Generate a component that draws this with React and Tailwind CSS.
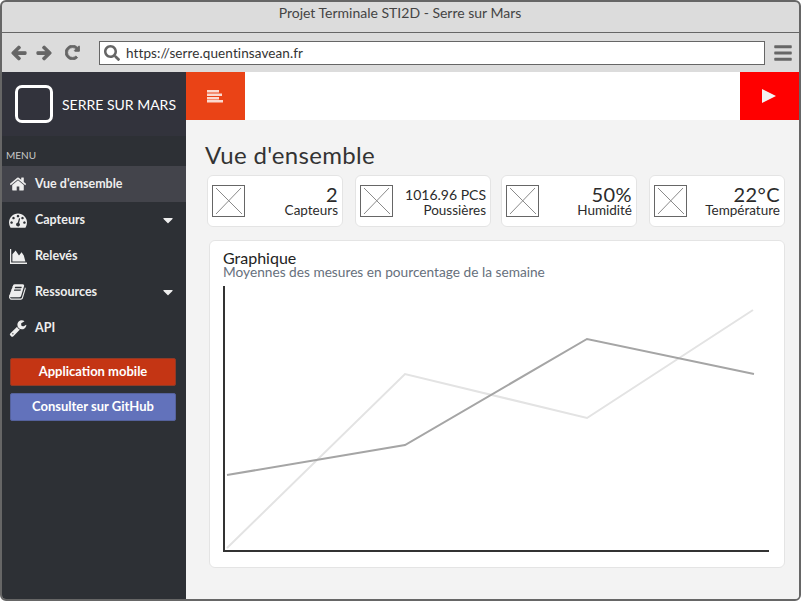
import React from 'react';
import { FaArrowLeft, FaArrowRight, FaRedoAlt, FaSearch, FaBars, FaCaretDown } from 'react-icons/fa';

const FONT = 'font-["Lato","Noto_Sans",sans-serif]';

const Glyph = ({ d, size = 18 }) => (
  <svg width={size} height={size} viewBox="0 0 1792 1792" fill="currentColor"><path d={d} /></svg>
);

const HomeIcon = () => (
  <Glyph d="M1472 992v480q0 26-19 45t-45 19h-384v-384h-256v384h-384q-26 0-45-19t-19-45v-480q0-1 .5-3t.5-3l575-474 575 474q1 2 1 6zm223-69l-62 74q-8 9-21 11h-3q-13 0-21-7l-692-577-692 577q-12 8-24 7-13-2-21-11l-62-74q-8-10-7-23.5t11-21.5l719-599q32-26 76-26t76 26l244 204v-195q0-14 9-23t23-9h192q14 0 23 9t9 23v408l219 182q10 8 11 21.5t-7 23.5z" />
);
const GaugeIcon = () => (
  <Glyph d="M384 1152q0-53-37.5-90.5t-90.5-37.5-90.5 37.5-37.5 90.5 37.5 90.5 90.5 37.5 90.5-37.5 37.5-90.5zm192-448q0-53-37.5-90.5t-90.5-37.5-90.5 37.5-37.5 90.5 37.5 90.5 90.5 37.5 90.5-37.5 37.5-90.5zm428 481l101-382q6-26-7.5-48.5t-38.5-29.5-48 6.5-30 39.5l-101 382q-60 5-107 43.5t-63 98.5q-20 77 20 146t117 89 146-20 89-117q16-60-6-117t-72-91zm660-33q0-53-37.5-90.5t-90.5-37.5-90.5 37.5-37.5 90.5 37.5 90.5 90.5 37.5 90.5-37.5 37.5-90.5zm-640-640q0-53-37.5-90.5t-90.5-37.5-90.5 37.5-37.5 90.5 37.5 90.5 90.5 37.5 90.5-37.5 37.5-90.5zm448 192q0-53-37.5-90.5t-90.5-37.5-90.5 37.5-37.5 90.5 37.5 90.5 90.5 37.5 90.5-37.5 37.5-90.5zm320 448q0 261-141 483-19 29-54 29h-1402q-35 0-54-29-141-221-141-483 0-182 71-348t191-286 286-191 348-71 348 71 286 191 191 286 71 348z" />
);
const ChartIcon = () => (
  <svg width="17" height="15" viewBox="0 0 17 15" fill="currentColor">
    <path d="M0 0h1.2v13.6H17V15H0z" />
    <path d="M2.4 12.6V5.2L5.6 1.4l3.4 5 2.6-3.2 2.2 3.4 1.6 6z" />
  </svg>
);
const BookIcon = () => (
  <Glyph d="M1639 478q40 57 18 129l-275 906q-19 64-76.5 107.5t-122.5 43.5h-923q-77 0-148.5-53.5t-99.5-131.5q-24-67-2-127 0-4 3-27t4-37q1-8-3-21.5t-3-19.5q2-11 8-21t16.5-23.5 16.5-23.5q23-38 45-91.5t30-91.5q3-10 .5-30t-.5-28q3-11 17-28t17-23q21-36 42-92t25-90q1-9-2.5-32t.5-28q4-13 22-30.5t22-22.5q19-26 42.5-84.5t27.5-96.5q1-8-3-25.5t-2-26.5q2-8 9-18t18-23 17-21q8-12 16.5-30.5t15-35 16-36 19.5-32 26.5-23.5 36-11.5 47.5 5.5l-1 3q38-9 51-9h761q74 0 114 56t18 130l-274 906q-36 119-71.5 153.5t-128.5 34.5h-869q-27 0-38 15-11 16-1 43 24 70 144 70h923q29 0 56-15.5t35-41.5l300-987q7-22 5-57 38 15 59 43zm-1064 2q-4 13 2 22.5t20 9.5h608q13 0 25.5-9.5t16.5-22.5l21-64q4-13-2-22.5t-20-9.5h-608q-13 0-25.5 9.5t-16.5 22.5zm-83 256q-4 13 2 22.5t20 9.5h608q13 0 25.5-9.5t16.5-22.5l21-64q4-13-2-22.5t-20-9.5h-608q-13 0-25.5 9.5t-16.5 22.5z" />
);
const WrenchIcon = () => (
  <Glyph d="M448 1472q0-26-19-45t-45-19-45 19-19 45 19 45 45 19 45-19 19-45zm644-420l-682 682q-37 37-90 37-52 0-91-37l-106-108q-38-36-38-90 0-53 38-91l681-681q39 98 114.5 173.5t173.5 114.5zm634-435q0 39-23 106-47 134-164.5 217.5t-258.5 83.5q-185 0-316.5-131.5t-131.5-316.5 131.5-316.5 316.5-131.5q58 0 121.5 16.5t107.5 46.5q16 11 16 28t-16 28l-293 169v224l193 107q5-3 79-48.5t135.5-81 70.5-35.5q15 0 23.5 10t8.5 25z" />
);

const MENU = [
  { label: "Vue d'ensemble", Icon: HomeIcon, active: true },
  { label: 'Capteurs', Icon: GaugeIcon, caret: true },
  { label: 'Relevés', Icon: ChartIcon },
  { label: 'Ressources', Icon: BookIcon, caret: true },
  { label: 'API', Icon: WrenchIcon },
];

const STATS = [
  { value: '2', label: 'Capteurs', big: true, gap: '' },
  { value: '1016.96 PCS', label: 'Poussières', gap: 'ml-[12px]' },
  { value: '50%', label: 'Humidité', big: true, gap: 'ml-[10px]' },
  { value: '22°C', label: 'Température', big: true, gap: 'ml-[12px]' },
];

const Placeholder = () => (
  <svg width="33" height="32" viewBox="0 0 33 32" className="shrink-0">
    <rect x="0.5" y="0.5" width="32" height="31" fill="#fff" stroke="#666" />
    <path d="M4 3 L30 29 M29 3 L4 29" stroke="#8a8a8a" strokeWidth="1" fill="none" />
  </svg>
);

const Stat = ({ value, label, big, gap }) => (
  <div className={`${gap} w-[136px] h-[52px] bg-white border border-[#e4e4e4] rounded-md flex items-center pl-[4px] pr-[4px]`}>
    <Placeholder />
    <div className="flex-1 text-right text-[#2b2b2b]">
      <div className={big ? 'text-[20px] leading-[19px] tracking-[0.4px]' : 'text-[14px] leading-[19px]'}>{value}</div>
      <div className="text-[13.5px] leading-[13px]">{label}</div>
    </div>
  </div>
);

export default function App() {
  return (
    <div className={`${FONT} w-[801px] h-[601px] border-2 border-[#666] rounded-md overflow-hidden flex flex-col bg-[#dcdcdc]`}>
      {/* browser chrome */}
      <div className="h-[31px] shrink-0 border-b border-[#666] flex items-center justify-center text-[14px] text-[#444] pb-[9px] pr-[1px]">
        Projet Terminale STI2D - Serre sur Mars
      </div>
      <div className="h-[39px] shrink-0 flex items-center pl-[9px]">
        <FaArrowLeft className="text-[#666] text-[16px]" stroke="currentColor" strokeWidth={40} />
        <FaArrowRight className="text-[#666] text-[16px] ml-[9px]" stroke="currentColor" strokeWidth={40} />
        <FaRedoAlt className="text-[#666] text-[15px] ml-[13px]" stroke="currentColor" strokeWidth={30} />
        <div className="ml-[19px] w-[666px] h-[24px] bg-white border border-[#666] flex items-center pl-[4px] pt-[1px] text-[13.5px] text-[#333]">
          <FaSearch className="text-[#666] text-[16px] -mt-[1px]" />
          <span className="ml-[6px] tracking-[0.1px]">https://serre.quentinsavean.fr</span>
        </div>
        <FaBars className="text-[#666] text-[20px] ml-[8px]" />
      </div>

      <div className="flex-1 flex min-h-0">
        {/* sidebar */}
        <div className="w-[184px] shrink-0 bg-[#2d3035] flex flex-col text-white">
          <div className="h-[64px] shrink-0 bg-[#32333c] flex items-center pl-[13px]">
            <div className="w-[38px] h-[38px] rounded-[7px] border-[3px] border-white" />
            <span className="ml-[9px] text-[14px]">SERRE SUR MARS</span>
          </div>
          <div className="h-[30px] shrink-0 flex items-end pl-[4px] pb-[3px] text-[10px] text-[#c8c8c8]">MENU</div>
          {MENU.map(({ label, Icon, active, caret }) => (
            <div key={label} className={`h-[36px] shrink-0 flex items-center pl-[7px] pr-[10px] text-[12.5px] font-bold ${active ? 'bg-[#43444b]' : ''} text-[#eee]`}>
              <span className="w-[18px] flex justify-center"><Icon /></span>
              <span className="ml-[8px] flex-1 pt-[1px]">{label}</span>
              {caret && <FaCaretDown className="text-[16px]" />}
            </div>
          ))}
          <div className="mt-[12px] ml-[8px] mr-[10px] h-[28px] bg-[#c43514] border border-[#8f3a26] rounded-[2px] flex items-center justify-center text-[13px] font-bold">
            Application mobile
          </div>
          <div className="mt-[7px] ml-[8px] mr-[10px] h-[28px] bg-[#6272bb] border border-[#55629c] rounded-[2px] flex items-center justify-center text-[13px] font-bold">
            Consulter sur GitHub
          </div>
        </div>

        {/* main */}
        <div className="flex-1 min-w-0 flex flex-col bg-[#f3f3f3]">
          <div className="h-[48px] shrink-0 bg-white flex justify-between">
            <div className="w-[59px] bg-[#ea4316] flex items-center pl-[21px]">
              <svg width="16" height="14" viewBox="0 0 16 14">
                <g fill="#fbd9cf">
                  <rect x="0" y="1" width="12" height="2.5" />
                  <rect x="0" y="4.5" width="15" height="2.5" />
                  <rect x="0" y="8" width="12" height="2.5" />
                  <rect x="0" y="11" width="16" height="2.5" />
                </g>
              </svg>
            </div>
            <div className="w-[59px] bg-[#ff0000] flex items-center pl-[22px]">
              <svg width="14" height="14" viewBox="0 0 14 14"><path d="M0 0L14 7L0 14z" fill="#f3f3f3" /></svg>
            </div>
          </div>
          <div className="flex-1 min-h-0 flex flex-col pl-[19px]">
            <div className="text-[24px] leading-[30px] mt-[20px] text-[#333] tracking-[0.3px]">Vue d'ensemble</div>
            <div className="flex mt-[5px] ml-[2px]">
              {STATS.map((s) => <Stat key={s.label} {...s} />)}
            </div>
            <div className="mt-[13px] ml-[4px] w-[576px] h-[328px] bg-white border border-[#e4e4e4] rounded-md pl-[13px] pt-[8px]">
              <div className="text-[16px] leading-[17px] text-[#222]">Graphique</div>
              <div className="text-[13.7px] leading-[13px] -mt-[1px] text-[#66707c]">Moyennes des mesures en pourcentage de la semaine</div>
              <svg width="548" height="268" viewBox="0 0 548 268" className="mt-[8px] block">
                <polyline points="4,262 182,88 364,132 530,24" fill="none" stroke="#e3e3e3" strokeWidth="2" />
                <polyline points="4,189 182,159 364,53 531,88" fill="none" stroke="#a5a5a5" strokeWidth="2" />
                <path d="M1 0 V265 H546" fill="none" stroke="#333" strokeWidth="2" />
              </svg>
            </div>
          </div>
        </div>
      </div>
    </div>
  );
}
